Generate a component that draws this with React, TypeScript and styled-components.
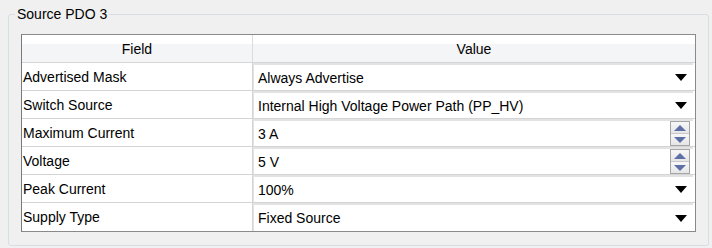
import React from "react";
import styled, { createGlobalStyle } from "styled-components";

const Global = createGlobalStyle`
  html, body { margin: 0; padding: 0; background: #f0f0f0; }
  body { font-family: "Liberation Sans", Arial, sans-serif; font-size: 14px; color: #000; }
`;

const Page = styled.div`
  width: 712px;
  height: 248px;
  box-sizing: border-box;
  padding: 6px 3px 0 8px;
  background: #f0f0f0;
  overflow: hidden;
`;

const Group = styled.fieldset`
  margin: 0;
  width: 701px;
  box-sizing: border-box;
  border: 1px solid #d5dfe5;
  border-radius: 3px;
  padding: 12px 12px 13px 12px;
  min-width: 0;
`;

const Legend = styled.legend`
  margin-left: -6px;
  padding: 0 2px;
  font-size: 14px;
  line-height: 16px;
  color: #000;
`;

const Table = styled.div`
  display: grid;
  grid-template-columns: 231px 1fr;
  border: 1px solid #8a8a8a;
  border-left-color: #7a7a7a;
  background: #fff;
`;

const HeadCell = styled.div<{ $last?: boolean }>`
  height: 27px;
  display: flex;
  align-items: center;
  justify-content: center;
  background: linear-gradient(#ffffff 0, #ffffff 33%, #f4f5f7 33%, #f4f5f7 100%);
  border-bottom: 1px solid #d5d5d5;
  border-right: ${(p) => (p.$last ? "none" : "1px solid #dcdcdc")};
  font-size: 14px;
`;

const FieldCell = styled.div<{ $last?: boolean }>`
  height: ${(p) => (p.$last ? "28px" : "27px")};
  display: flex;
  align-items: center;
  padding-left: 1px;
  border-bottom: ${(p) => (p.$last ? "none" : "1px solid #d4d4d4")};
  border-right: 1px solid #d4d4d4;
  white-space: nowrap;
`;

const ValueCell = styled.div<{ $last?: boolean }>`
  height: ${(p) => (p.$last ? "28px" : "27px")};
  box-sizing: content-box;
  border-bottom: ${(p) => (p.$last ? "none" : "1px solid #d4d4d4")};
  padding: 0 2px 0 0;
  display: flex;
`;

const Editor = styled.div`
  flex: 1;
  display: flex;
  align-items: center;
  box-sizing: border-box;
  border-top: 2px solid #e2e3e5;
  border-left: 1px solid #e2e3e5;
  padding-left: 4px;
  padding-right: 3px;
  background: #fff;
  white-space: nowrap;
`;

const Text = styled.span`
  flex: 1;
`;

const Arrow = styled.div`
  width: 0;
  height: 0;
  border-left: 6px solid transparent;
  border-right: 6px solid transparent;
  border-top: 7px solid #000;
  margin-right: 3px;
`;

const Spinner = styled.div`
  display: flex;
  flex-direction: column;
  border: 1px solid #a5a5a5;
  width: 18px;
`;

const SpinBtn = styled.div<{ $down?: boolean }>`
  height: 11px;
  display: flex;
  align-items: center;
  justify-content: center;
  background: linear-gradient(#f7f7f7, #e6e6e6);
  border-top: ${(p) => (p.$down ? "1px solid #c8c8c8" : "none")};
  & > span {
    width: 0;
    height: 0;
    border-left: 6px solid transparent;
    border-right: 6px solid transparent;
    ${(p) =>
      p.$down
        ? "border-top: 6px solid #5d6fa6;"
        : "border-bottom: 6px solid #5d6fa6;"}
  }
`;

type Row = { field: string; value: string; kind: "combo" | "spin" };

const rows: Row[] = [
  { field: "Advertised Mask", value: "Always Advertise", kind: "combo" },
  { field: "Switch Source", value: "Internal High Voltage Power Path (PP_HV)", kind: "combo" },
  { field: "Maximum Current", value: "3 A", kind: "spin" },
  { field: "Voltage", value: "5 V", kind: "spin" },
  { field: "Peak Current", value: "100%", kind: "combo" },
  { field: "Supply Type", value: "Fixed Source", kind: "combo" },
];

export default function App() {
  return (
    <Page>
      <Global />
      <Group>
        <Legend>Source PDO 3</Legend>
        <Table>
          <HeadCell>Field</HeadCell>
          <HeadCell $last>Value</HeadCell>
          {rows.map((r, i) => {
            const last = i === rows.length - 1;
            return (
              <React.Fragment key={r.field}>
                <FieldCell $last={last}>{r.field}</FieldCell>
                <ValueCell $last={last}>
                  <Editor>
                    <Text>{r.value}</Text>
                    {r.kind === "combo" ? (
                      <Arrow />
                    ) : (
                      <Spinner>
                        <SpinBtn>
                          <span />
                        </SpinBtn>
                        <SpinBtn $down>
                          <span />
                        </SpinBtn>
                      </Spinner>
                    )}
                  </Editor>
                </ValueCell>
              </React.Fragment>
            );
          })}
        </Table>
      </Group>
    </Page>
  );
}
